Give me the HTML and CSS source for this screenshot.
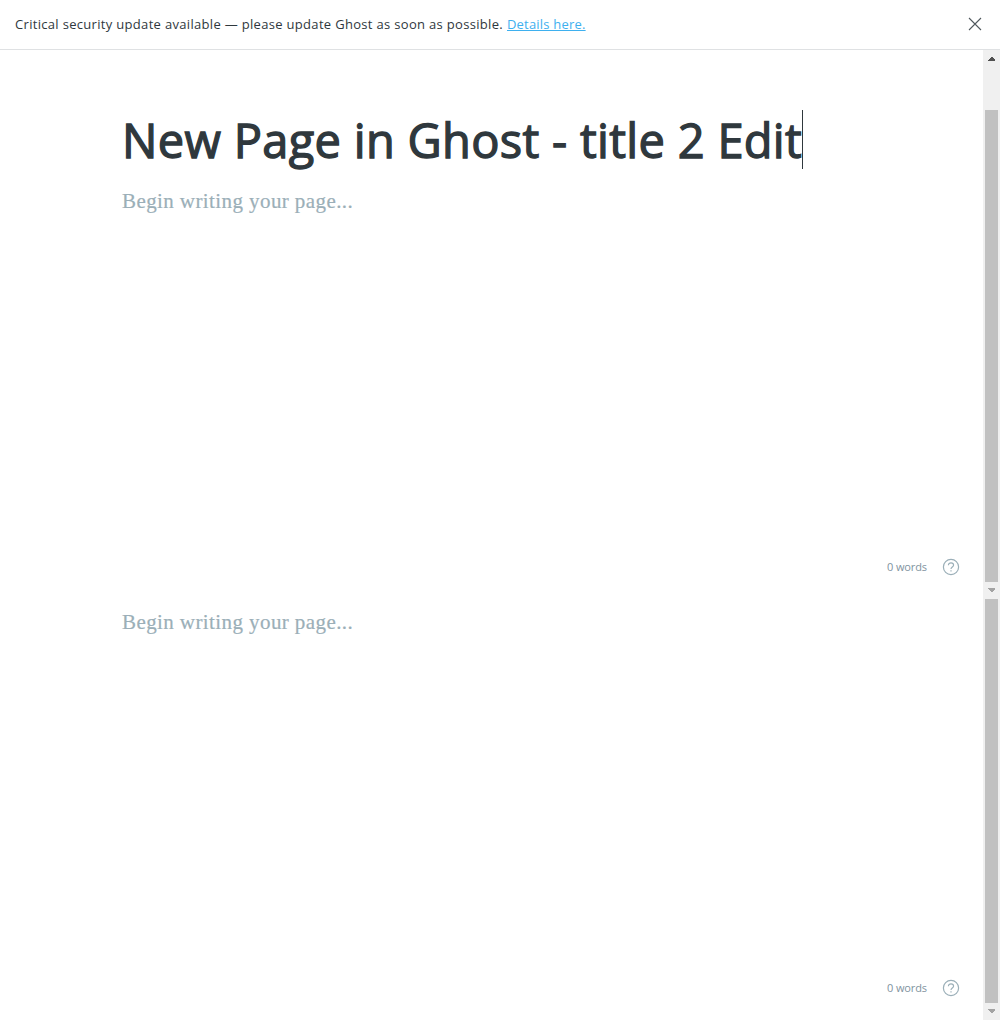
FILE: index.html
```html
<!DOCTYPE html>
<html lang="en">
<head>
<meta charset="utf-8">
<title>Ghost editor</title>
<link rel="stylesheet" href="styles.css">
</head>
<body>
<header class="alert">
  <p class="alert-text"><span class="alert-message">Critical security update available — please update Ghost as soon as possible.</span><a class="alert-link" href="#">Details here.</a></p>
  <svg class="close" viewBox="0 0 14 14"><path d="M1 1l12 12M13 1L1 13"/></svg>
</header>
<section class="pane pane-top">
  <main class="editor">
    <h1 class="title"><span class="title-text">New Page in Ghost - title 2 Edit</span><span class="caret"></span></h1>
    <p class="placeholder">Begin writing your page...</p>
    <footer class="status"><span class="words">0 words</span>
      <svg class="help" viewBox="0 0 18 18"><circle cx="9" cy="9" r="7.6"/><path d="M6.4 7.2C6.4 5.7 7.5 4.8 9 4.8s2.6.9 2.6 2.3c0 1.9-2.6 2-2.6 4M9 12.2v1.3"/></svg>
    </footer>
  </main>
  <div class="scrollbar">
    <svg class="arrow arrow-up" viewBox="0 0 17 17"><path d="M5 11h7v-1l-3-3H8l-3 3z"/></svg>
    <div class="thumb"></div>
    <svg class="arrow" viewBox="0 0 17 17"><path d="M5 6h7v1l-3 3H8L5 7z"/></svg>
  </div>
</section>
<section class="pane pane-bottom">
  <main class="editor">
    <p class="placeholder">Begin writing your page...</p>
    <footer class="status"><span class="words">0 words</span>
      <svg class="help" viewBox="0 0 18 18"><circle cx="9" cy="9" r="7.6"/><path d="M6.4 7.2C6.4 5.7 7.5 4.8 9 4.8s2.6.9 2.6 2.3c0 1.9-2.6 2-2.6 4M9 12.2v1.3"/></svg>
    </footer>
  </main>
  <div class="scrollbar">
    <div class="thumb"></div>
    <svg class="arrow" viewBox="0 0 17 17"><path d="M5 6h7v1l-3 3H8L5 7z"/></svg>
  </div>
</section>
</body>
</html>
```
FILE: styles.css
```css
* { box-sizing: border-box; }
body {
  margin: 0;
  height: 1020px;
  display: flex;
  flex-direction: column;
  background: #fff;
  color: #2f383d;
  font-family: "Open Sans", "Noto Sans", sans-serif;
}
h1, p { margin: 0; font-weight: 400; }
.alert {
  height: 50px;
  flex: none;
  display: flex;
  align-items: center;
  justify-content: space-between;
  padding: 0 18px 1px 15px;
  border-bottom: 1px solid #dfe1e3;
  background: #fff;
}
.alert-text {
  display: flex;
  gap: 4px;
  font-size: 13px;
  line-height: 20px;
  white-space: nowrap;
}
.alert-message { letter-spacing: 0.315px; }
.alert-link { color: #3eb0ef; letter-spacing: 0.2px; }
.close { width: 14px; height: 14px; fill: none; stroke: #50585d; stroke-width: 1.1; }
.pane { display: flex; flex: none; }
.pane-top { height: 549px; }
.pane-bottom { height: 421px; }
.editor {
  flex: 1;
  display: flex;
  flex-direction: column;
  padding: 0 23px 0 122px;
}
.pane-top .editor { padding-top: 60px; }
.pane-bottom .editor { padding-top: 8px; }
.title {
  display: flex;
  height: 59px;
  margin-bottom: 17px;
  font-size: 47px;
  line-height: 60px;
  letter-spacing: 0.31px;
  -webkit-text-stroke: 1.3px #2f383d;
  white-space: nowrap;
}
.title-text { width: 680px; }
.caret { width: 1px; background: #2f383d; }
.placeholder {
  height: 30px;
  color: #9bafb8;
  font-family: "Liberation Serif", serif;
  font-size: 21px;
  line-height: 30px;
  letter-spacing: 0.41px;
  -webkit-text-stroke: 0.2px #9bafb8;
  white-space: nowrap;
}
.status {
  display: flex;
  align-items: center;
  justify-content: flex-end;
  gap: 15px;
  height: 18px;
  margin-top: auto;
  margin-bottom: 23px;
  color: #7f949f;
  font-size: 11px;
}
.words { padding-bottom: 2px; letter-spacing: -0.1px; }
.help { width: 18px; height: 18px; fill: none; stroke: #9bafb8; stroke-width: 1.2; }
.scrollbar {
  width: 17px;
  display: flex;
  flex-direction: column;
  background: #f0f0f0;
}
.thumb { flex: 1; margin: 0 2px; background: #c1c1c1; }
.arrow { width: 17px; height: 17px; flex: none; fill: #a3a3a3; shape-rendering: crispEdges; }
.arrow-up { fill: #505050; margin-bottom: 43px; }
```
